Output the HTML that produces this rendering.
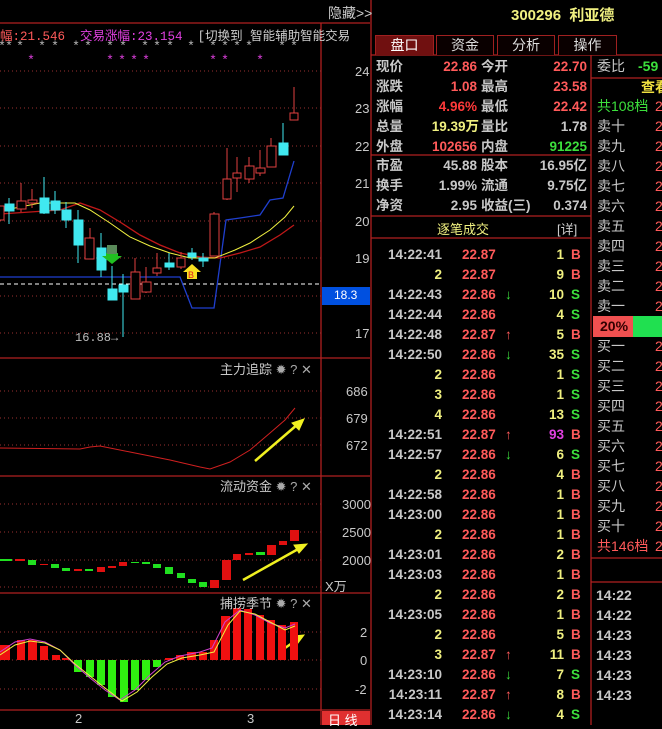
<!DOCTYPE html>
<html><head><meta charset="utf-8">
<style>
*{margin:0;padding:0;box-sizing:border-box}
body{width:662px;height:725px;background:#000;overflow:hidden;position:relative;font-family:"Liberation Sans","Noto Sans CJK SC",sans-serif;font-size:13px;color:#c8c8c8}
.a{position:absolute;white-space:nowrap}
.r{color:#ff5a5a}.g{color:#3ce03c}.y{color:#f0f080}.w{color:#c8c8c8}.m{color:#e040e0}
.row{position:absolute;left:371px;width:220px;height:20px;line-height:20px;font-weight:bold;font-size:13.5px}
.row span{position:absolute}
.q{position:absolute;height:20px;line-height:20px;font-size:14px;white-space:nowrap}
.v{position:absolute;left:655px;height:20px;line-height:20px;font-size:14px;color:#ff5a5a}
.tab{position:absolute;top:35px;height:20px;border:1px solid #a02020;border-bottom:none;text-align:center;line-height:19px;font-size:14px;color:#ddd;background:#0a0000}
</style></head><body>
<svg class="a" style="left:0;top:0" width="662" height="725">
<g stroke="#b02020" stroke-width="1.3" fill="none">
<line x1="0" y1="23" x2="370" y2="23"/>
<line x1="321" y1="23" x2="321" y2="725"/>
<line x1="371" y1="0" x2="371" y2="725"/>
<line x1="0" y1="358" x2="370" y2="358"/>
<line x1="0" y1="476" x2="370" y2="476"/>
<line x1="0" y1="593" x2="370" y2="593"/>
<line x1="0" y1="710" x2="370" y2="710"/>
<line x1="371" y1="55" x2="662" y2="55"/>
<line x1="371" y1="155" x2="591" y2="155"/>
<line x1="371" y1="216" x2="591" y2="216"/>
<line x1="371" y1="238" x2="591" y2="238"/>
<line x1="591" y1="55" x2="591" y2="725"/>
<line x1="591" y1="78" x2="662" y2="78"/>
<line x1="591" y1="558" x2="662" y2="558"/>
<line x1="591" y1="582" x2="662" y2="582"/>
</g>
<g stroke="#9a3030" stroke-width="1" stroke-dasharray="1 3">
<line x1="0" y1="71" x2="321" y2="71"/><line x1="0" y1="108" x2="321" y2="108"/>
<line x1="0" y1="146" x2="321" y2="146"/><line x1="0" y1="183" x2="321" y2="183"/>
<line x1="0" y1="221" x2="321" y2="221"/><line x1="0" y1="258" x2="321" y2="258"/>
<line x1="0" y1="296" x2="321" y2="296"/><line x1="0" y1="333" x2="321" y2="333"/>
<line x1="0" y1="391" x2="321" y2="391"/><line x1="0" y1="418" x2="321" y2="418"/><line x1="0" y1="445" x2="321" y2="445"/>
<line x1="0" y1="504" x2="321" y2="504"/><line x1="0" y1="532" x2="321" y2="532"/><line x1="0" y1="560" x2="321" y2="560"/><line x1="0" y1="587" x2="321" y2="587"/>
<line x1="0" y1="632" x2="321" y2="632"/><line x1="0" y1="660" x2="321" y2="660"/><line x1="0" y1="689" x2="321" y2="689"/>
</g>
<line x1="0" y1="284" x2="321" y2="284" stroke="#fff" stroke-dasharray="4 3"/>
<!-- stars -->
<g font-family="Liberation Mono" font-size="13" fill="#bbb" text-anchor="middle">
<text x="2" y="50">*</text><text x="9" y="50">*</text><text x="20" y="50">*</text><text x="42" y="50">*</text><text x="55" y="50">*</text><text x="76" y="50">*</text><text x="88" y="50">*</text><text x="110" y="50">*</text><text x="123" y="50">*</text><text x="145" y="50">*</text><text x="157" y="50">*</text><text x="170" y="50">*</text><text x="191" y="50">*</text><text x="213" y="50">*</text><text x="225" y="50">*</text><text x="237" y="50">*</text><text x="249" y="50">*</text><text x="282" y="50">*</text><text x="294" y="50">*</text>
</g>
<g font-family="Liberation Mono" font-size="13" fill="#e040e0" text-anchor="middle">
<text x="31" y="64">*</text><text x="110" y="64">*</text><text x="122" y="64">*</text><text x="134" y="64">*</text><text x="146" y="64">*</text><text x="213" y="64">*</text><text x="225" y="64">*</text><text x="260" y="64">*</text>
</g>
<polyline fill="none" stroke="#1f3fcf" stroke-width="1.3" points="0,277 180,277 192,308 214,308 226,220 240,218 260,215 270,200 283,198 294,161"/>
<polyline fill="none" stroke="#c01818" stroke-width="1.3" points="0,214 60,210 80,203 100,210 120,222 140,235 160,245 180,253 200,257 220,258 240,253 260,247 280,235 294,225"/>
<polyline fill="none" stroke="#f0f040" stroke-width="1" points="0,211 40,203 75,203 90,210 110,223 130,237 150,246 170,253 190,258 215,258 235,250 250,243 270,230 285,217 294,206"/>
<g stroke-width="1">
<g stroke="#e04040" fill="#000">
<rect x="-4" y="206" width="8" height="14"/>
<line x1="21" y1="183" x2="21" y2="212"/><rect x="17" y="201" width="9" height="8"/>
<line x1="32" y1="189" x2="32" y2="208"/><rect x="28" y="200" width="9" height="3"/>
<line x1="90" y1="228" x2="90" y2="238"/><rect x="85" y="238" width="9" height="21"/>
<line x1="135" y1="258" x2="135" y2="272"/><rect x="131" y="272" width="9" height="27"/>
<line x1="146" y1="267" x2="146" y2="293"/><rect x="142" y="282" width="9" height="10"/>
<line x1="157" y1="253" x2="157" y2="276"/><rect x="153" y="268" width="8" height="5"/>
<line x1="181" y1="252" x2="181" y2="269"/><rect x="177" y="258" width="8" height="9"/>
<line x1="214" y1="212" x2="214" y2="214"/><rect x="210" y="214" width="9" height="42"/>
<line x1="227" y1="148" x2="227" y2="200"/><rect x="223" y="179" width="8" height="20"/>
<line x1="237" y1="157" x2="237" y2="192"/><rect x="233" y="173" width="8" height="5"/>
<line x1="249" y1="157" x2="249" y2="183"/><rect x="245" y="166" width="9" height="13"/>
<line x1="260" y1="150" x2="260" y2="176"/><rect x="256" y="168" width="9" height="5"/>
<line x1="271" y1="138" x2="271" y2="167"/><rect x="267" y="146" width="9" height="21"/>
<line x1="294" y1="87" x2="294" y2="113"/><rect x="290" y="113" width="8" height="7"/>
</g>
<g stroke="#40e8f0" fill="#40e8f0">
<line x1="9" y1="198" x2="9" y2="224"/><rect x="5" y="204" width="9" height="7"/>
<line x1="44" y1="177" x2="44" y2="214"/><rect x="40" y="198" width="9" height="15"/>
<line x1="55" y1="191" x2="55" y2="214"/><rect x="51" y="201" width="9" height="9"/>
<line x1="66" y1="202" x2="66" y2="228"/><rect x="62" y="210" width="9" height="10"/>
<line x1="78" y1="210" x2="78" y2="263"/><rect x="74" y="220" width="9" height="25"/>
<line x1="101" y1="233" x2="101" y2="277"/><rect x="97" y="248" width="9" height="22"/>
<line x1="112" y1="266" x2="112" y2="300"/><rect x="108" y="289" width="9" height="11"/>
<line x1="123" y1="274" x2="123" y2="337"/><rect x="119" y="285" width="9" height="7"/>
<line x1="169" y1="253" x2="169" y2="270"/><rect x="165" y="263" width="9" height="4"/>
<line x1="192" y1="248" x2="192" y2="260"/><rect x="188" y="253" width="8" height="4"/>
<line x1="203" y1="253" x2="203" y2="267"/><rect x="199" y="258" width="9" height="3"/>
<line x1="283" y1="123" x2="283" y2="143"/><rect x="279" y="143" width="9" height="12"/>
</g>
</g>
<polygon points="106,253 118,253 118,256 122,256 112,264 102,256 106,256" fill="#20c020"/>
<rect x="107" y="245" width="10" height="9" fill="#5a8a5a"/>
<polygon points="192,264 201,272 197,272 197,279 187,279 187,272 183,272" fill="#f8e020"/>
<text x="188" y="278" font-size="9" fill="#e02020" font-family="Liberation Sans">B</text>
<text x="75" y="341" font-size="12" fill="#bbb" font-family="Liberation Mono">16.88→</text>
<polyline fill="none" stroke="#d02020" points="0,448 80,449 90,447 100,446 130,452 170,460 200,467 210,469 230,462 250,450 270,433 285,420 295,408"/>
<g stroke="#f0f020" stroke-width="2.5" fill="#f0f020">
<line x1="255" y1="461" x2="298" y2="424"/><polygon points="304,419 292,423 299,430" stroke-width="1"/>
<line x1="243" y1="580" x2="300" y2="548"/><polygon points="307,544 294,545 299,553" stroke-width="1"/>
<line x1="285" y1="648" x2="298" y2="639"/><polygon points="304,635 293,636 298,643" stroke-width="1"/>
</g>
<g fill="#20e020">
<rect x="0" y="559" width="12" height="2"/><rect x="28" y="560" width="8" height="5"/><rect x="51" y="564" width="8" height="4"/><rect x="62" y="568" width="8" height="3"/><rect x="85" y="569" width="8" height="2"/><rect x="131" y="562" width="8" height="1"/><rect x="142" y="562" width="8" height="2"/><rect x="153" y="564" width="8" height="4"/><rect x="165" y="567" width="8" height="7"/><rect x="177" y="573" width="8" height="5"/><rect x="188" y="579" width="8" height="4"/><rect x="199" y="582" width="8" height="5"/><rect x="256" y="552" width="9" height="3"/>
</g>
<g fill="#e01010">
<rect x="15" y="559" width="10" height="2"/><rect x="40" y="564" width="8" height="1"/><rect x="74" y="569" width="8" height="2"/><rect x="97" y="567" width="8" height="5"/><rect x="108" y="566" width="8" height="2"/><rect x="119" y="562" width="8" height="4"/><rect x="210" y="580" width="9" height="8"/><rect x="222" y="560" width="9" height="20"/><rect x="233" y="554" width="8" height="6"/><rect x="245" y="553" width="8" height="2"/><rect x="267" y="545" width="9" height="10"/><rect x="279" y="541" width="8" height="4"/><rect x="290" y="530" width="9" height="11"/>
</g>
<g fill="#f01010">
<rect x="0" y="645" width="10" height="15"/><rect x="17" y="640" width="8" height="20"/><rect x="28" y="640" width="9" height="20"/><rect x="40" y="646" width="8" height="14"/><rect x="52" y="655" width="8" height="5"/><rect x="62" y="658" width="7" height="2"/>
<rect x="165" y="658" width="8" height="2"/><rect x="176" y="655" width="8" height="5"/><rect x="187" y="652" width="9" height="8"/><rect x="199" y="652" width="8" height="8"/><rect x="210" y="640" width="8" height="20"/><rect x="221" y="616" width="9" height="44"/><rect x="233" y="608" width="8" height="52"/><rect x="244" y="609" width="8" height="51"/><rect x="256" y="615" width="8" height="45"/><rect x="267" y="620" width="8" height="40"/><rect x="278" y="625" width="8" height="35"/><rect x="290" y="622" width="8" height="38"/>
</g>
<g fill="#30f010">
<rect x="74" y="660" width="8" height="12"/><rect x="86" y="660" width="8" height="17"/><rect x="97" y="660" width="8" height="25"/><rect x="108" y="660" width="8" height="37"/><rect x="120" y="660" width="8" height="42"/><rect x="131" y="660" width="8" height="30"/><rect x="142" y="660" width="8" height="20"/><rect x="153" y="660" width="8" height="7"/>
</g>
<polyline fill="none" stroke="#d040d0" points="0,652 15,642 30,639 45,642 60,650 75,665 90,678 105,690 120,700 135,690 150,675 165,662 180,656 200,652 212,648 225,622 240,610 255,615 270,623 285,628 295,624"/>
<polyline fill="none" stroke="#f0f040" points="0,655 15,645 30,641 45,643 60,650 75,664 90,676 105,688 122,701 137,692 152,677 167,664 182,658 200,655 214,652 228,625 240,611 255,614 270,622 285,630 295,626"/>
<rect x="322" y="287" width="48" height="18" fill="#0050e0"/>
<rect x="322" y="711" width="48" height="14" fill="#e03030"/>
<rect x="593" y="316" width="40" height="21" fill="#f05050"/><rect x="633" y="316" width="29" height="21" fill="#20e050"/>
</svg>

<div class="a" style="left:328px;top:3px;font-size:14px;color:#ccc">隐藏&gt;&gt;</div>
<div class="a" style="left:0;top:25px;font-size:12.5px;font-family:'Liberation Mono','Noto Sans CJK SC',monospace"><span class="r">幅:21.546</span>&nbsp;&nbsp;<span class="m">交易涨幅:23.154</span>&nbsp;&nbsp;<span style="color:#ccc">[切换到 智能辅助智能交易</span></div>
<div class="a" style="left:355px;top:64px">24</div><div class="a" style="left:355px;top:101px">23</div><div class="a" style="left:355px;top:139px">22</div><div class="a" style="left:355px;top:176px">21</div><div class="a" style="left:355px;top:214px">20</div><div class="a" style="left:355px;top:251px">19</div><div class="a" style="left:355px;top:326px">17</div>
<div class="a" style="left:334px;top:288px;color:#fff;font-size:12px">18.3</div>
<div class="a" style="left:220px;top:359px;font-size:13px">主力追踪 <span style="color:#aaa">✹ ? ✕</span></div>
<div class="a" style="left:346px;top:384px">686</div><div class="a" style="left:346px;top:411px">679</div><div class="a" style="left:346px;top:438px">672</div>
<div class="a" style="left:220px;top:476px;font-size:13px">流动资金 <span style="color:#aaa">✹ ? ✕</span></div>
<div class="a" style="left:342px;top:497px">3000</div><div class="a" style="left:342px;top:525px">2500</div><div class="a" style="left:342px;top:553px">2000</div><div class="a" style="left:325px;top:576px">X万</div>
<div class="a" style="left:220px;top:593px;font-size:13px">捕捞季节 <span style="color:#aaa">✹ ? ✕</span></div>
<div class="a" style="left:360px;top:625px">2</div><div class="a" style="left:360px;top:653px">0</div><div class="a" style="left:355px;top:682px">-2</div>
<div class="a" style="left:75px;top:711px">2</div><div class="a" style="left:247px;top:711px">3</div>
<div class="a" style="left:328px;top:710px;color:#fff;font-size:13px">日 线</div>

<div class="a" style="left:511px;top:4px;color:#f0f080;font-weight:bold;font-size:15px">300296 &nbsp;利亚德</div>
<div class="tab" style="left:375px;width:59px;background:#701010;color:#fff">盘口</div>
<div class="tab" style="left:436px;width:58px">资金</div>
<div class="tab" style="left:497px;width:58px">分析</div>
<div class="tab" style="left:558px;width:59px">操作</div>

<div class="row" style="top:57px"><span style="left:5px" class="w">现价</span><span style="right:114px" class="r">22.86</span><span style="left:110px" class="w">今开</span><span style="right:4px" class="r">22.70</span></div>
<div class="row" style="top:77px"><span style="left:5px" class="w">涨跌</span><span style="right:114px" class="r">1.08</span><span style="left:110px" class="w">最高</span><span style="right:4px" class="r">23.58</span></div>
<div class="row" style="top:97px"><span style="left:5px" class="w">涨幅</span><span style="right:114px;color:#ff3a3a">4.96%</span><span style="left:110px" class="w">最低</span><span style="right:4px" class="r">22.42</span></div>
<div class="row" style="top:117px"><span style="left:5px" class="w">总量</span><span style="right:112px" class="y">19.39万</span><span style="left:110px" class="w">量比</span><span style="right:4px" class="w">1.78</span></div>
<div class="row" style="top:137px"><span style="left:5px" class="w">外盘</span><span style="right:114px" class="r">102656</span><span style="left:110px" class="w">内盘</span><span style="right:4px" class="g">91225</span></div>
<div class="row" style="top:156px"><span style="left:5px" class="w">市盈</span><span style="right:114px" class="w">45.88</span><span style="left:110px" class="w">股本</span><span style="right:4px" class="w">16.95亿</span></div>
<div class="row" style="top:176px"><span style="left:5px" class="w">换手</span><span style="right:114px" class="w">1.99%</span><span style="left:110px" class="w">流通</span><span style="right:4px" class="w">9.75亿</span></div>
<div class="row" style="top:196px"><span style="left:5px" class="w">净资</span><span style="right:114px" class="w">2.95</span><span style="left:110px" class="w">收益(三)</span><span style="right:4px" class="w">0.374</span></div>
<div class="a" style="left:437px;top:219px;color:#f0f080;font-size:13px">逐笔成交</div>
<div class="a" style="left:557px;top:219px;color:#ccc;font-size:13px">[详]</div>

<div class="row" style="top:245px"><span style="right:149px" class="w">14:22:41</span><span style="left:91px" class="r">22.87</span><span style="right:27px" class="y">1</span><span style="left:200px" class="r">B</span></div>
<div class="row" style="top:265px"><span style="right:149px" class="y">2</span><span style="left:91px" class="r">22.87</span><span style="right:27px" class="y">9</span><span style="left:200px" class="r">B</span></div>
<div class="row" style="top:285px"><span style="right:149px" class="w">14:22:43</span><span style="left:91px" class="r">22.86</span><span style="left:134px" class="g">↓</span><span style="right:27px" class="y">10</span><span style="left:200px" class="g">S</span></div>
<div class="row" style="top:305px"><span style="right:149px" class="w">14:22:44</span><span style="left:91px" class="r">22.86</span><span style="right:27px" class="y">4</span><span style="left:200px" class="g">S</span></div>
<div class="row" style="top:325px"><span style="right:149px" class="w">14:22:48</span><span style="left:91px" class="r">22.87</span><span style="left:134px" class="r">↑</span><span style="right:27px" class="y">5</span><span style="left:200px" class="r">B</span></div>
<div class="row" style="top:345px"><span style="right:149px" class="w">14:22:50</span><span style="left:91px" class="r">22.86</span><span style="left:134px" class="g">↓</span><span style="right:27px" class="y">35</span><span style="left:200px" class="g">S</span></div>
<div class="row" style="top:365px"><span style="right:149px" class="y">2</span><span style="left:91px" class="r">22.86</span><span style="right:27px" class="y">1</span><span style="left:200px" class="g">S</span></div>
<div class="row" style="top:385px"><span style="right:149px" class="y">3</span><span style="left:91px" class="r">22.86</span><span style="right:27px" class="y">1</span><span style="left:200px" class="g">S</span></div>
<div class="row" style="top:405px"><span style="right:149px" class="y">4</span><span style="left:91px" class="r">22.86</span><span style="right:27px" class="y">13</span><span style="left:200px" class="g">S</span></div>
<div class="row" style="top:425px"><span style="right:149px" class="w">14:22:51</span><span style="left:91px" class="r">22.87</span><span style="left:134px" class="r">↑</span><span style="right:27px" class="m">93</span><span style="left:200px" class="r">B</span></div>
<div class="row" style="top:445px"><span style="right:149px" class="w">14:22:57</span><span style="left:91px" class="r">22.86</span><span style="left:134px" class="g">↓</span><span style="right:27px" class="y">6</span><span style="left:200px" class="g">S</span></div>
<div class="row" style="top:465px"><span style="right:149px" class="y">2</span><span style="left:91px" class="r">22.86</span><span style="right:27px" class="y">4</span><span style="left:200px" class="r">B</span></div>
<div class="row" style="top:485px"><span style="right:149px" class="w">14:22:58</span><span style="left:91px" class="r">22.86</span><span style="right:27px" class="y">1</span><span style="left:200px" class="r">B</span></div>
<div class="row" style="top:505px"><span style="right:149px" class="w">14:23:00</span><span style="left:91px" class="r">22.86</span><span style="right:27px" class="y">1</span><span style="left:200px" class="r">B</span></div>
<div class="row" style="top:525px"><span style="right:149px" class="y">2</span><span style="left:91px" class="r">22.86</span><span style="right:27px" class="y">1</span><span style="left:200px" class="r">B</span></div>
<div class="row" style="top:545px"><span style="right:149px" class="w">14:23:01</span><span style="left:91px" class="r">22.86</span><span style="right:27px" class="y">2</span><span style="left:200px" class="r">B</span></div>
<div class="row" style="top:565px"><span style="right:149px" class="w">14:23:03</span><span style="left:91px" class="r">22.86</span><span style="right:27px" class="y">1</span><span style="left:200px" class="r">B</span></div>
<div class="row" style="top:585px"><span style="right:149px" class="y">2</span><span style="left:91px" class="r">22.86</span><span style="right:27px" class="y">2</span><span style="left:200px" class="r">B</span></div>
<div class="row" style="top:605px"><span style="right:149px" class="w">14:23:05</span><span style="left:91px" class="r">22.86</span><span style="right:27px" class="y">1</span><span style="left:200px" class="r">B</span></div>
<div class="row" style="top:625px"><span style="right:149px" class="y">2</span><span style="left:91px" class="r">22.86</span><span style="right:27px" class="y">5</span><span style="left:200px" class="r">B</span></div>
<div class="row" style="top:645px"><span style="right:149px" class="y">3</span><span style="left:91px" class="r">22.87</span><span style="left:134px" class="r">↑</span><span style="right:27px" class="y">11</span><span style="left:200px" class="r">B</span></div>
<div class="row" style="top:665px"><span style="right:149px" class="w">14:23:10</span><span style="left:91px" class="r">22.86</span><span style="left:134px" class="g">↓</span><span style="right:27px" class="y">7</span><span style="left:200px" class="g">S</span></div>
<div class="row" style="top:685px"><span style="right:149px" class="w">14:23:11</span><span style="left:91px" class="r">22.87</span><span style="left:134px" class="r">↑</span><span style="right:27px" class="y">8</span><span style="left:200px" class="r">B</span></div>
<div class="row" style="top:705px"><span style="right:149px" class="w">14:23:14</span><span style="left:91px" class="r">22.86</span><span style="left:134px" class="g">↓</span><span style="right:27px" class="y">4</span><span style="left:200px" class="g">S</span></div>

<div class="q" style="left:597px;top:56px">委比</div><div class="q g" style="left:638px;top:56px;font-weight:bold">-59</div>
<div class="q" style="left:641px;top:77px;color:#f0e040;font-weight:bold">查看</div>
<div class="q g" style="left:597px;top:96px">共108档</div><div class="v" style="top:96px">2</div>
<div class="q" style="left:597px;top:116px">卖十</div><div class="v" style="top:116px">2</div>
<div class="q" style="left:597px;top:136px">卖九</div><div class="v" style="top:136px">2</div>
<div class="q" style="left:597px;top:156px">卖八</div><div class="v" style="top:156px">2</div>
<div class="q" style="left:597px;top:176px">卖七</div><div class="v" style="top:176px">2</div>
<div class="q" style="left:597px;top:196px">卖六</div><div class="v" style="top:196px">2</div>
<div class="q" style="left:597px;top:216px">卖五</div><div class="v" style="top:216px">2</div>
<div class="q" style="left:597px;top:236px">卖四</div><div class="v" style="top:236px">2</div>
<div class="q" style="left:597px;top:256px">卖三</div><div class="v" style="top:256px">2</div>
<div class="q" style="left:597px;top:276px">卖二</div><div class="v" style="top:276px">2</div>
<div class="q" style="left:597px;top:296px">卖一</div><div class="v" style="top:296px">2</div>
<div class="q" style="left:600px;top:316px;color:#300;font-weight:bold">20%</div>
<div class="q" style="left:597px;top:336px">买一</div><div class="v" style="top:336px">2</div>
<div class="q" style="left:597px;top:356px">买二</div><div class="v" style="top:356px">2</div>
<div class="q" style="left:597px;top:376px">买三</div><div class="v" style="top:376px">2</div>
<div class="q" style="left:597px;top:396px">买四</div><div class="v" style="top:396px">2</div>
<div class="q" style="left:597px;top:416px">买五</div><div class="v" style="top:416px">2</div>
<div class="q" style="left:597px;top:436px">买六</div><div class="v" style="top:436px">2</div>
<div class="q" style="left:597px;top:456px">买七</div><div class="v" style="top:456px">2</div>
<div class="q" style="left:597px;top:476px">买八</div><div class="v" style="top:476px">2</div>
<div class="q" style="left:597px;top:496px">买九</div><div class="v" style="top:496px">2</div>
<div class="q" style="left:597px;top:516px">买十</div><div class="v" style="top:516px">2</div>
<div class="q r" style="left:597px;top:536px">共146档</div><div class="v" style="top:536px">2</div>
<div class="q" style="left:596px;top:585px;font-weight:bold">14:22</div>
<div class="q" style="left:596px;top:605px;font-weight:bold">14:22</div>
<div class="q" style="left:596px;top:625px;font-weight:bold">14:23</div>
<div class="q" style="left:596px;top:645px;font-weight:bold">14:23</div>
<div class="q" style="left:596px;top:665px;font-weight:bold">14:23</div>
<div class="q" style="left:596px;top:685px;font-weight:bold">14:23</div>
</body></html>
